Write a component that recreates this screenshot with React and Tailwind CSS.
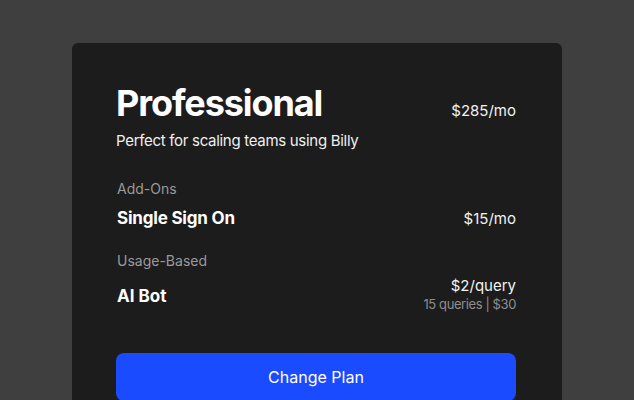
export default function App() {
  return (
    <div className="w-[634px] h-[400px] overflow-hidden bg-[#3f3f3f] pt-[43px] pl-[72px]" style={{ fontFamily: "Inter, 'Noto Sans', sans-serif" }}>
      <div className="w-[490px] h-[400px] rounded-[6px] bg-[#1c1c1c] pt-[40px] pl-[44px]">
        <div className="w-[400px]">
          <div className="flex items-baseline justify-between">
            <h1 className="text-[36px] leading-[40px] font-bold text-white tracking-[-1.1px]">Professional</h1>
            <span className="text-[15px] leading-[20px] text-[#f2f2f2]">$285/mo</span>
          </div>
          <p className="mt-[8px] text-[15px] leading-[20px] text-[#f0f0f0] tracking-[-0.3px]">Perfect for scaling teams using Billy</p>

          <div className="mt-[28px] pl-[1px] text-[14px] leading-[20px] text-[#9a9a9a]">Add-Ons</div>
          <div className="mt-[7px] flex items-baseline justify-between pl-[1px]">
            <span className="text-[17px] leading-[24px] font-bold text-white tracking-[-0.2px]">Single Sign On</span>
            <span className="text-[15px] leading-[20px] text-[#f2f2f2]">$15/mo</span>
          </div>

          <div className="mt-[21px] pl-[1px] text-[14px] leading-[20px] text-[#9a9a9a]">Usage-Based</div>
          <div className="mt-[5px] flex items-center justify-between pl-[1px]">
            <span className="text-[17px] leading-[24px] font-bold text-white mt-[3px]">AI Bot</span>
            <div className="flex flex-col items-end">
              <span className="text-[15px] leading-[20px] text-[#f2f2f2]">$2/query</span>
              <span className="text-[13px] leading-[16px] text-[#8e8e8e] tracking-[-0.4px]">15 queries | $30</span>
            </div>
          </div>

          <button className="mt-[41px] w-full h-[48px] rounded-[8px] bg-[#1a4bff] text-white text-[16px] leading-[20px]">Change Plan</button>
        </div>
      </div>
    </div>
  );
}
